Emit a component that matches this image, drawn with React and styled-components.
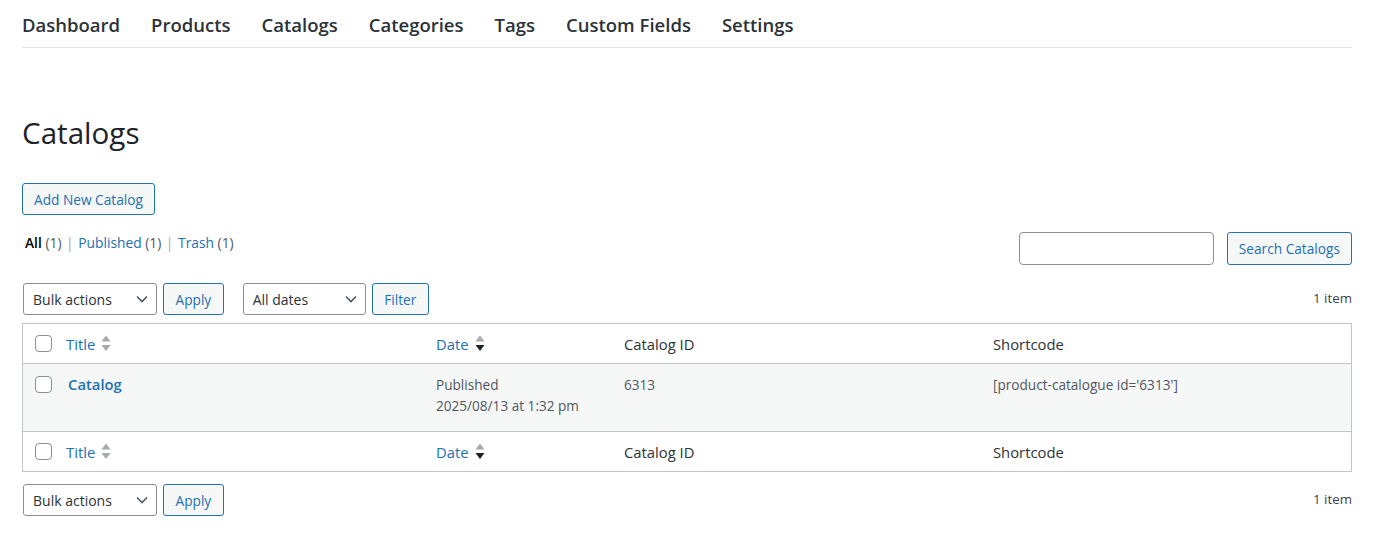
import React from "react";
import styled, { createGlobalStyle } from "styled-components";

const Global = createGlobalStyle`
  html, body { margin: 0; padding: 0; background: #ffffff; }
  body {
    font-family: "Open Sans", "Noto Sans", "Liberation Sans", sans-serif;
    color: #3c434a;
    font-size: 13px;
  }
  * { box-sizing: border-box; }
`;

const Page = styled.div`
  padding: 0 31px 0 22px;
`;

const Nav = styled.nav`
  display: flex;
  gap: 31px;
  height: 48px;
  padding-top: 10px;
  border-bottom: 1px solid #e3e3e3;
`;

const NavItem = styled.a`
  font-size: 18.5px;
  font-weight: 600;
  color: #2c3338;
  line-height: 30px;
  height: 30px;
  text-decoration: none;
`;

const Heading = styled.h1`
  margin: 65px 0 0;
  font-size: 29.6px;
  font-weight: 400;
  line-height: 40px;
  color: #1d2327;
`;

const Button = styled.button`
  font-family: inherit;
  font-size: 13.7px;
  height: ${(p) => p.$h || 32}px;
  padding: 0 ${(p) => p.$px || 11}px;
  border: 1px solid #2271b1;
  border-radius: 3px;
  background: #f6f7f7;
  color: #2271b1;
  cursor: pointer;
  white-space: nowrap;
`;

const AddRow = styled.div`
  margin-top: 30px;
`;

const SearchRow = styled.div`
  display: flex;
  justify-content: space-between;
  align-items: flex-start;
  margin-top: 17px;
`;

const Subsub = styled.ul`
  display: flex;
  list-style: none;
  margin: 0;
  padding: 0 0 0 3px;
  font-size: 13.8px;
  line-height: 22px;
  color: #646970;
`;

const SubItem = styled.li`
  white-space: pre;
`;

const SubLink = styled.a`
  color: ${(p) => (p.$current ? "#000" : "#2271b1")};
  font-weight: ${(p) => (p.$current ? 600 : 400)};
  text-decoration: none;
`;

const Count = styled.span`
  color: #50575e;
`;

const Sep = styled.span`
  color: #a7aaad;
  padding: 0 1px;
`;

const SearchBox = styled.div`
  display: flex;
  gap: 13px;
`;

const SearchInput = styled.input`
  width: 195px;
  height: 33px;
  border: 1px solid #8c8f94;
  border-radius: 4px;
  padding: 0 8px;
  font-family: inherit;
  font-size: 14px;
`;

const Tablenav = styled.div`
  display: flex;
  align-items: center;
  height: 32px;
  margin: ${(p) => p.$m};
`;

const Actions = styled.div`
  display: flex;
  gap: 6px;
  margin-left: ${(p) => p.$ml || 0}px;
`;

const Select = styled.div`
  display: flex;
  align-items: center;
  justify-content: space-between;
  width: ${(p) => p.$w}px;
  height: 32px;
  border: 1px solid #8c8f94;
  border-radius: 3px;
  padding: 0 8px 0 9px;
  font-size: 14px;
  color: #2c3338;
  background: #fff;
  margin-left: ${(p) => p.$ml || 0}px;
`;

const Chevron = () => (
  <svg width="12" height="8" viewBox="0 0 12 8">
    <path d="M1 1.5 L6 6.5 L11 1.5" fill="none" stroke="#50575e" strokeWidth="1.6" />
  </svg>
);

const Pages = styled.div`
  margin-left: auto;
  margin-top: -3px;
  font-size: 13.3px;
  color: #3c434a;
`;

const Table = styled.table`
  width: 100%;
  border: 1px solid #c3c4c7;
  border-spacing: 0;
  table-layout: fixed;
  margin-top: 8px;
  font-size: 14.8px;
`;

const Th = styled.th`
  text-align: left;
  font-weight: 400;
  height: 40px;
  padding: 0 0 0 10px;
  color: #2c3338;
  vertical-align: middle;
  width: ${(p) => (p.$w ? p.$w + "px" : "auto")};
  border-${(p) => p.$side || "bottom"}: 1px solid #c3c4c7;
`;

const CheckTh = styled.td`
  width: 33px;
  height: 40px;
  padding: 0 0 0 12px;
  vertical-align: middle;
  border-${(p) => p.$side || "bottom"}: 1px solid #c3c4c7;
`;

const SortLink = styled.a`
  display: inline-flex;
  align-items: center;
  gap: 6px;
  color: #2271b1;
  text-decoration: none;
`;

const Checkbox = styled.span`
  display: block;
  width: 17px;
  height: 17px;
  border: 1px solid #8c8f94;
  border-radius: 4px;
  background: #fff;
`;

const Row = styled.tr`
  background: #f6f7f7;
`;

const Td = styled.td`
  vertical-align: top;
  height: 67px;
  padding: ${(p) => p.$pad || "10px 10px 0"};
  color: #50575e;
  font-size: 13.6px;
  line-height: 21px;
`;

const RowTitle = styled.a`
  color: #2271b1;
  font-weight: 600;
  font-size: 14.8px;
  text-decoration: none;
  display: inline-block;
  padding-left: 2px;
`;

const SortIcon = ({ active }) => (
  <svg width="10" height="17" viewBox="0 0 10 17">
    <path d="M5 0.5 L9.5 6.5 L0.5 6.5 Z" fill="#a7aaad" />
    <path d="M0.5 10 L9.5 10 L5 16 Z" fill={active ? "#1d2327" : "#a7aaad"} />
  </svg>
);

const HeadRow = ({ side }) => (
  <tr>
    <CheckTh $side={side}>
      <Checkbox />
    </CheckTh>
    <Th $w={370} $side={side}>
      <SortLink>Title <SortIcon /></SortLink>
    </Th>
    <Th $w={188} $side={side}>
      <SortLink>Date <SortIcon active /></SortLink>
    </Th>
    <Th $w={369} $side={side}>Catalog ID</Th>
    <Th $side={side}>Shortcode</Th>
  </tr>
);

const BulkNav = ({ m, bottom }) => (
  <Tablenav $m={m}>
    <Actions>
      <Select $w={134} $ml={1}>Bulk actions <Chevron /></Select>
      <Button $px={11.5}>Apply</Button>
    </Actions>
    {!bottom && (
      <Actions $ml={19}>
        <Select $w={123}>All dates <Chevron /></Select>
        <Button $px={11.5}>Filter</Button>
      </Actions>
    )}
    <Pages>1 item</Pages>
  </Tablenav>
);

export default function App() {
  return (
    <Page>
      <Global />
      <Nav>
        {["Dashboard", "Products", "Catalogs", "Categories", "Tags", "Custom Fields", "Settings"].map((t) => (
          <NavItem key={t}>{t}</NavItem>
        ))}
      </Nav>
      <Heading>Catalogs</Heading>
      <AddRow>
        <Button $px={11}>Add New Catalog</Button>
      </AddRow>
      <SearchRow>
        <Subsub>
          <SubItem><SubLink $current>All</SubLink> <Count>(1)</Count> <Sep>|</Sep> </SubItem>
          <SubItem><SubLink>Published</SubLink> <Count>(1)</Count> <Sep>|</Sep> </SubItem>
          <SubItem><SubLink>Trash</SubLink> <Count>(1)</Count></SubItem>
        </Subsub>
        <SearchBox>
          <SearchInput />
          <Button $h={33}>Search Catalogs</Button>
        </SearchBox>
      </SearchRow>
      <BulkNav m="18px 0 0" />
      <Table>
        <thead>
          <HeadRow side="bottom" />
        </thead>
        <tbody>
          <Row>
            <Td $pad="12px 0 0 12px"><Checkbox /></Td>
            <Td><RowTitle>Catalog</RowTitle></Td>
            <Td>Published<br />2025/08/13 at 1:32 pm</Td>
            <Td>6313</Td>
            <Td>[product-catalogue id='6313']</Td>
          </Row>
        </tbody>
        <tfoot>
          <HeadRow side="top" />
        </tfoot>
      </Table>
      <BulkNav m="12px 0 0" bottom />
    </Page>
  );
}
